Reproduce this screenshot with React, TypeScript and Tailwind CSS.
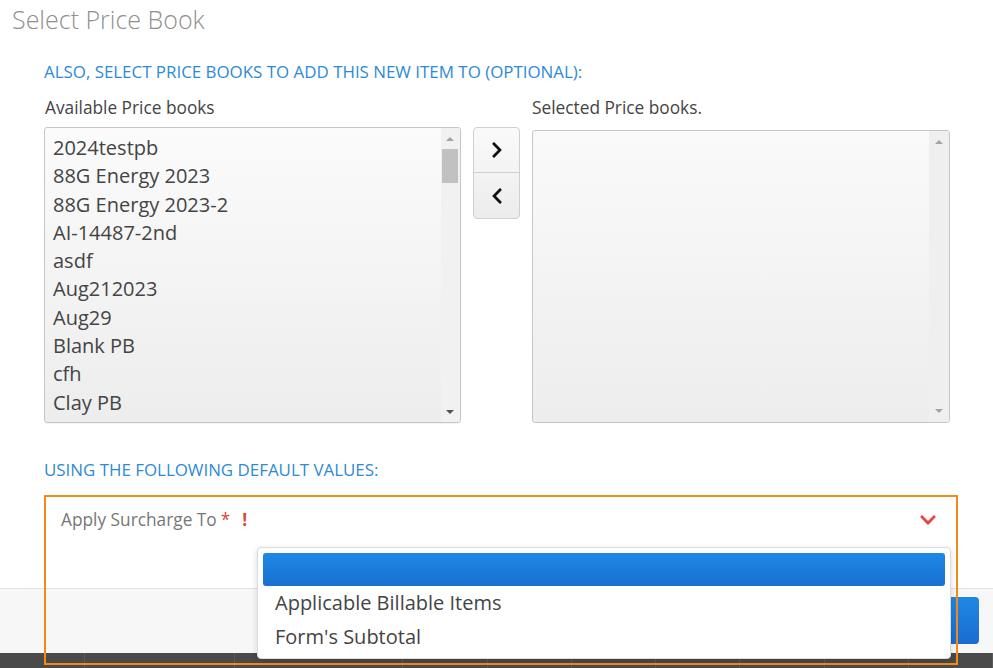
import React from 'react';
import { FaChevronRight, FaChevronLeft, FaChevronDown } from 'react-icons/fa';

const available = [
  '2024testpb',
  '88G Energy 2023',
  '88G Energy 2023-2',
  'AI-14487-2nd',
  'asdf',
  'Aug212023',
  'Aug29',
  'Blank PB',
  'cfh',
  'Clay PB',
];

const options = ['Applicable Billable Items', "Form's Subtotal"];

const Arrow: React.FC<{ up?: boolean; color: string }> = ({ up, color }) => (
  <div
    className={`h-0 w-0 border-x-[4px] border-x-transparent ${up ? 'border-b-[4px]' : 'border-t-[4px]'}`}
    style={up ? { borderBottomColor: color } : { borderTopColor: color }}
  />
);

const App: React.FC = () => {
  return (
    <div className="relative h-[668px] w-[993px] overflow-hidden bg-white font-['Open_Sans',sans-serif]">
      {/* modal body */}
      <div className="h-[589px] border-b border-[#e3e3e3]">
        <h1 className="pl-3 pt-[3px] pb-px text-[25px] font-light leading-8 text-[#8f8f8f]">Select Price Book</h1>

        <div className="pl-11 pr-[43px]">
          <div className="mt-6 text-[16.9px] leading-6 text-[#2d8ad6]">
            ALSO, SELECT PRICE BOOKS TO ADD THIS NEW ITEM TO (OPTIONAL):
          </div>

          <div className="mt-3 flex items-start gap-3">
            <div className="w-[417px] flex-none">
              <div className="mb-[7px] pl-px text-[17.3px] leading-6 text-[#444]">Available Price books</div>
              <div className="flex h-[296px] overflow-hidden rounded-[3px] border border-[#c6c6c6] bg-gradient-to-b from-[#fbfbfb] to-[#ededed] shadow-[0_1px_1px_rgba(0,0,0,0.05)]">
                <ul className="flex-1 pl-2 pt-[6px] text-[20px] leading-[28.3px] text-[#444]">
                  {available.map((item) => (
                    <li key={item}>{item}</li>
                  ))}
                </ul>
                <div className="flex w-[19px] flex-col items-center bg-[#f1f1f1] pr-px">
                  <div className="flex h-[21px] items-center">
                    <Arrow up color="#a3a3a3" />
                  </div>
                  <div className="h-[34px] w-[16px] bg-[#c1c1c1]" />
                  <div className="flex-1" />
                  <div className="flex h-[21px] items-center">
                    <Arrow color="#505050" />
                  </div>
                </div>
              </div>
            </div>

            <div className="mt-[31px] flex w-[47px] flex-none flex-col overflow-hidden rounded-[4px] border border-[#cfcfcf] bg-gradient-to-b from-[#fafafa] to-[#ececec]">
              <button className="flex h-[45px] items-center justify-center border-b border-[#cfcfcf] text-[#111]">
                <FaChevronRight size={18} />
              </button>
              <button className="flex h-[45px] items-center justify-center text-[#111]">
                <FaChevronLeft size={18} />
              </button>
            </div>

            <div className="w-[418px] flex-none">
              <div className="mb-[10px] text-[17.3px] leading-6 text-[#444]">Selected Price books.</div>
              <div className="flex h-[293px] overflow-hidden rounded-[3px] border border-[#c6c6c6] bg-gradient-to-b from-[#fafafa] to-[#ededed]">
                <div className="flex-1" />
                <div className="flex w-[20px] flex-col items-center bg-[#efefef]">
                  <div className="flex h-[22px] items-center">
                    <Arrow up color="#a3a3a3" />
                  </div>
                  <div className="flex-1" />
                  <div className="flex h-[22px] items-center">
                    <Arrow color="#a3a3a3" />
                  </div>
                </div>
              </div>
            </div>
          </div>

          <div className="mt-[35px] text-[16.9px] leading-6 text-[#2d8ad6]">USING THE FOLLOWING DEFAULT VALUES:</div>

          <div className="mt-[26px] flex items-center pl-[17px] pr-[22px] text-[17.3px] leading-6">
            <span className="text-[#777]">Apply Surcharge To</span>
            <span className="ml-[4px] text-[#e0453a]">*</span>
            <span className="ml-[12px] font-bold text-[#e0453a]">!</span>
            <span className="ml-auto mr-[-9px] text-[#e0493a]">
              <FaChevronDown size={18} />
            </span>
          </div>
        </div>
      </div>

      {/* footer */}
      <div className="flex h-[64px] justify-end bg-[#f7f7f7] pr-[14px] pt-[8px]">
        <div className="h-[47px] w-[120px] rounded-[4px] bg-gradient-to-b from-[#1e88e5] to-[#1a6ccf]" />
      </div>
      <div className="flex h-[15px] bg-[#4a4a4a]">
        {[87, 153, 172, 86, 86, 86, 86, 86, 86, 86].map((w, i) => (
          <div key={i} className="h-full border-r border-[#5a5a5a]" style={{ width: w }} />
        ))}
      </div>

      {/* orange highlight */}
      <div className="pointer-events-none absolute left-[44px] top-[495px] h-[170px] w-[914px] border-2 border-[#f28a17]" />

      {/* open dropdown menu */}
      <div className="absolute left-[257px] top-[547px] w-[694px] rounded-[4px] border border-[#dcdcdc] bg-white px-[5px] pb-[4px] pt-[5px] shadow-[0_2px_6px_rgba(0,0,0,0.15)]">
        <div className="h-[33px] rounded-[3px] bg-gradient-to-b from-[#1e88e5] to-[#1a6fd1]" />
        {options.map((o) => (
          <div key={o} className="pl-[12px] text-[20px] leading-[34px] text-[#444]">
            {o}
          </div>
        ))}
      </div>
    </div>
  );
};

export default App;
